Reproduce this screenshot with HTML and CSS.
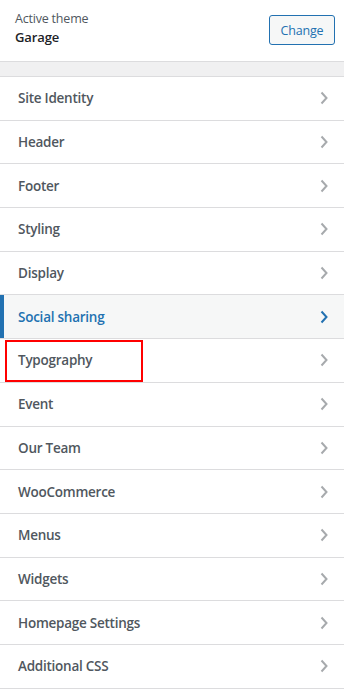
FILE: index.html
```html
<!DOCTYPE html>
<html>
<head>
<meta charset="utf-8">
<link rel="stylesheet" href="styles.css">
</head>
<body>
<div class="panel">
  <div class="theme">
    <div class="theme-info">
      <span class="theme-label">Active theme</span>
      <span class="theme-name">Garage</span>
    </div>
    <button class="change-btn">Change</button>
  </div>
  <div class="spacer"></div>
  <ul class="menu">
    <li class="item"><span>Site Identity</span><svg class="chev" viewBox="0 0 8 14"><path d="M1.5 1.5 L6.5 7 L1.5 12.5"/></svg></li>
    <li class="item"><span>Header</span><svg class="chev" viewBox="0 0 8 14"><path d="M1.5 1.5 L6.5 7 L1.5 12.5"/></svg></li>
    <li class="item"><span>Footer</span><svg class="chev" viewBox="0 0 8 14"><path d="M1.5 1.5 L6.5 7 L1.5 12.5"/></svg></li>
    <li class="item"><span>Styling</span><svg class="chev" viewBox="0 0 8 14"><path d="M1.5 1.5 L6.5 7 L1.5 12.5"/></svg></li>
    <li class="item"><span>Display</span><svg class="chev" viewBox="0 0 8 14"><path d="M1.5 1.5 L6.5 7 L1.5 12.5"/></svg></li>
    <li class="item active"><span>Social sharing</span><svg class="chev" viewBox="0 0 8 14"><path d="M1.5 1.5 L6.5 7 L1.5 12.5"/></svg></li>
    <li class="item"><span class="highlight">Typography</span><svg class="chev" viewBox="0 0 8 14"><path d="M1.5 1.5 L6.5 7 L1.5 12.5"/></svg></li>
    <li class="item"><span>Event</span><svg class="chev" viewBox="0 0 8 14"><path d="M1.5 1.5 L6.5 7 L1.5 12.5"/></svg></li>
    <li class="item"><span>Our Team</span><svg class="chev" viewBox="0 0 8 14"><path d="M1.5 1.5 L6.5 7 L1.5 12.5"/></svg></li>
    <li class="item"><span>WooCommerce</span><svg class="chev" viewBox="0 0 8 14"><path d="M1.5 1.5 L6.5 7 L1.5 12.5"/></svg></li>
    <li class="item"><span>Menus</span><svg class="chev" viewBox="0 0 8 14"><path d="M1.5 1.5 L6.5 7 L1.5 12.5"/></svg></li>
    <li class="item"><span>Widgets</span><svg class="chev" viewBox="0 0 8 14"><path d="M1.5 1.5 L6.5 7 L1.5 12.5"/></svg></li>
    <li class="item"><span>Homepage Settings</span><svg class="chev" viewBox="0 0 8 14"><path d="M1.5 1.5 L6.5 7 L1.5 12.5"/></svg></li>
    <li class="item"><span>Additional CSS</span><svg class="chev" viewBox="0 0 8 14"><path d="M1.5 1.5 L6.5 7 L1.5 12.5"/></svg></li>
  </ul>
</div>
</body>
</html>
```

FILE: styles.css
```css
*, *::before, *::after { box-sizing: border-box; }
html, body { margin: 0; padding: 0; background: #fff; }
body { font-family: "Open Sans", "Noto Sans", sans-serif; width: 344px; height: 689px; overflow: hidden; }
.panel { width: 344px; }
.theme {
  height: 62px;
  display: flex;
  justify-content: space-between;
  align-items: flex-start;
  padding: 10px 9px 0 15px;
  border-bottom: 1px solid #dcdcde;
}
.theme-info { display: flex; flex-direction: column; }
.theme-label { font-size: 12.5px; color: #50575e; line-height: 18px; letter-spacing: -0.2px; }
.theme-name { font-size: 13px; font-weight: 600; color: #1d2327; line-height: 19px; letter-spacing: -0.1px; }
.change-btn {
  margin-top: 5px;
  width: 66px;
  height: 30px;
  border: 1px solid #2271b1;
  border-radius: 3px;
  background: #f6f7f7;
  color: #2271b1;
  font-family: inherit;
  font-size: 12.5px;
  padding: 0;
  letter-spacing: -0.2px;
}
.spacer { height: 15px; background: #f0f0f1; border-bottom: 1px solid #dcdcde; }
.menu { list-style: none; margin: 0; padding: 0; }
.item {
  height: 43.7px;
  border-bottom: 1px solid #dcdcde;
  display: flex;
  align-items: center;
  justify-content: space-between;
  padding: 0 16px 0 18px;
  font-size: 13.5px;
  font-weight: 600;
  color: #50575e;
  letter-spacing: -0.25px;
  position: relative;
}
.item.active { background: #f6f7f7; color: #2271b1; box-shadow: inset 4px 0 0 #2271b1; }
.chev { width: 8px; height: 14px; fill: none; stroke: #a7aaad; stroke-width: 2; }
.item.active .chev { stroke: #2271b1; }
.highlight::before {
  content: "";
  position: absolute;
  left: 5px;
  top: 0.5px;
  width: 138px;
  height: 42px;
  border: 2px solid #f00;
}
```
